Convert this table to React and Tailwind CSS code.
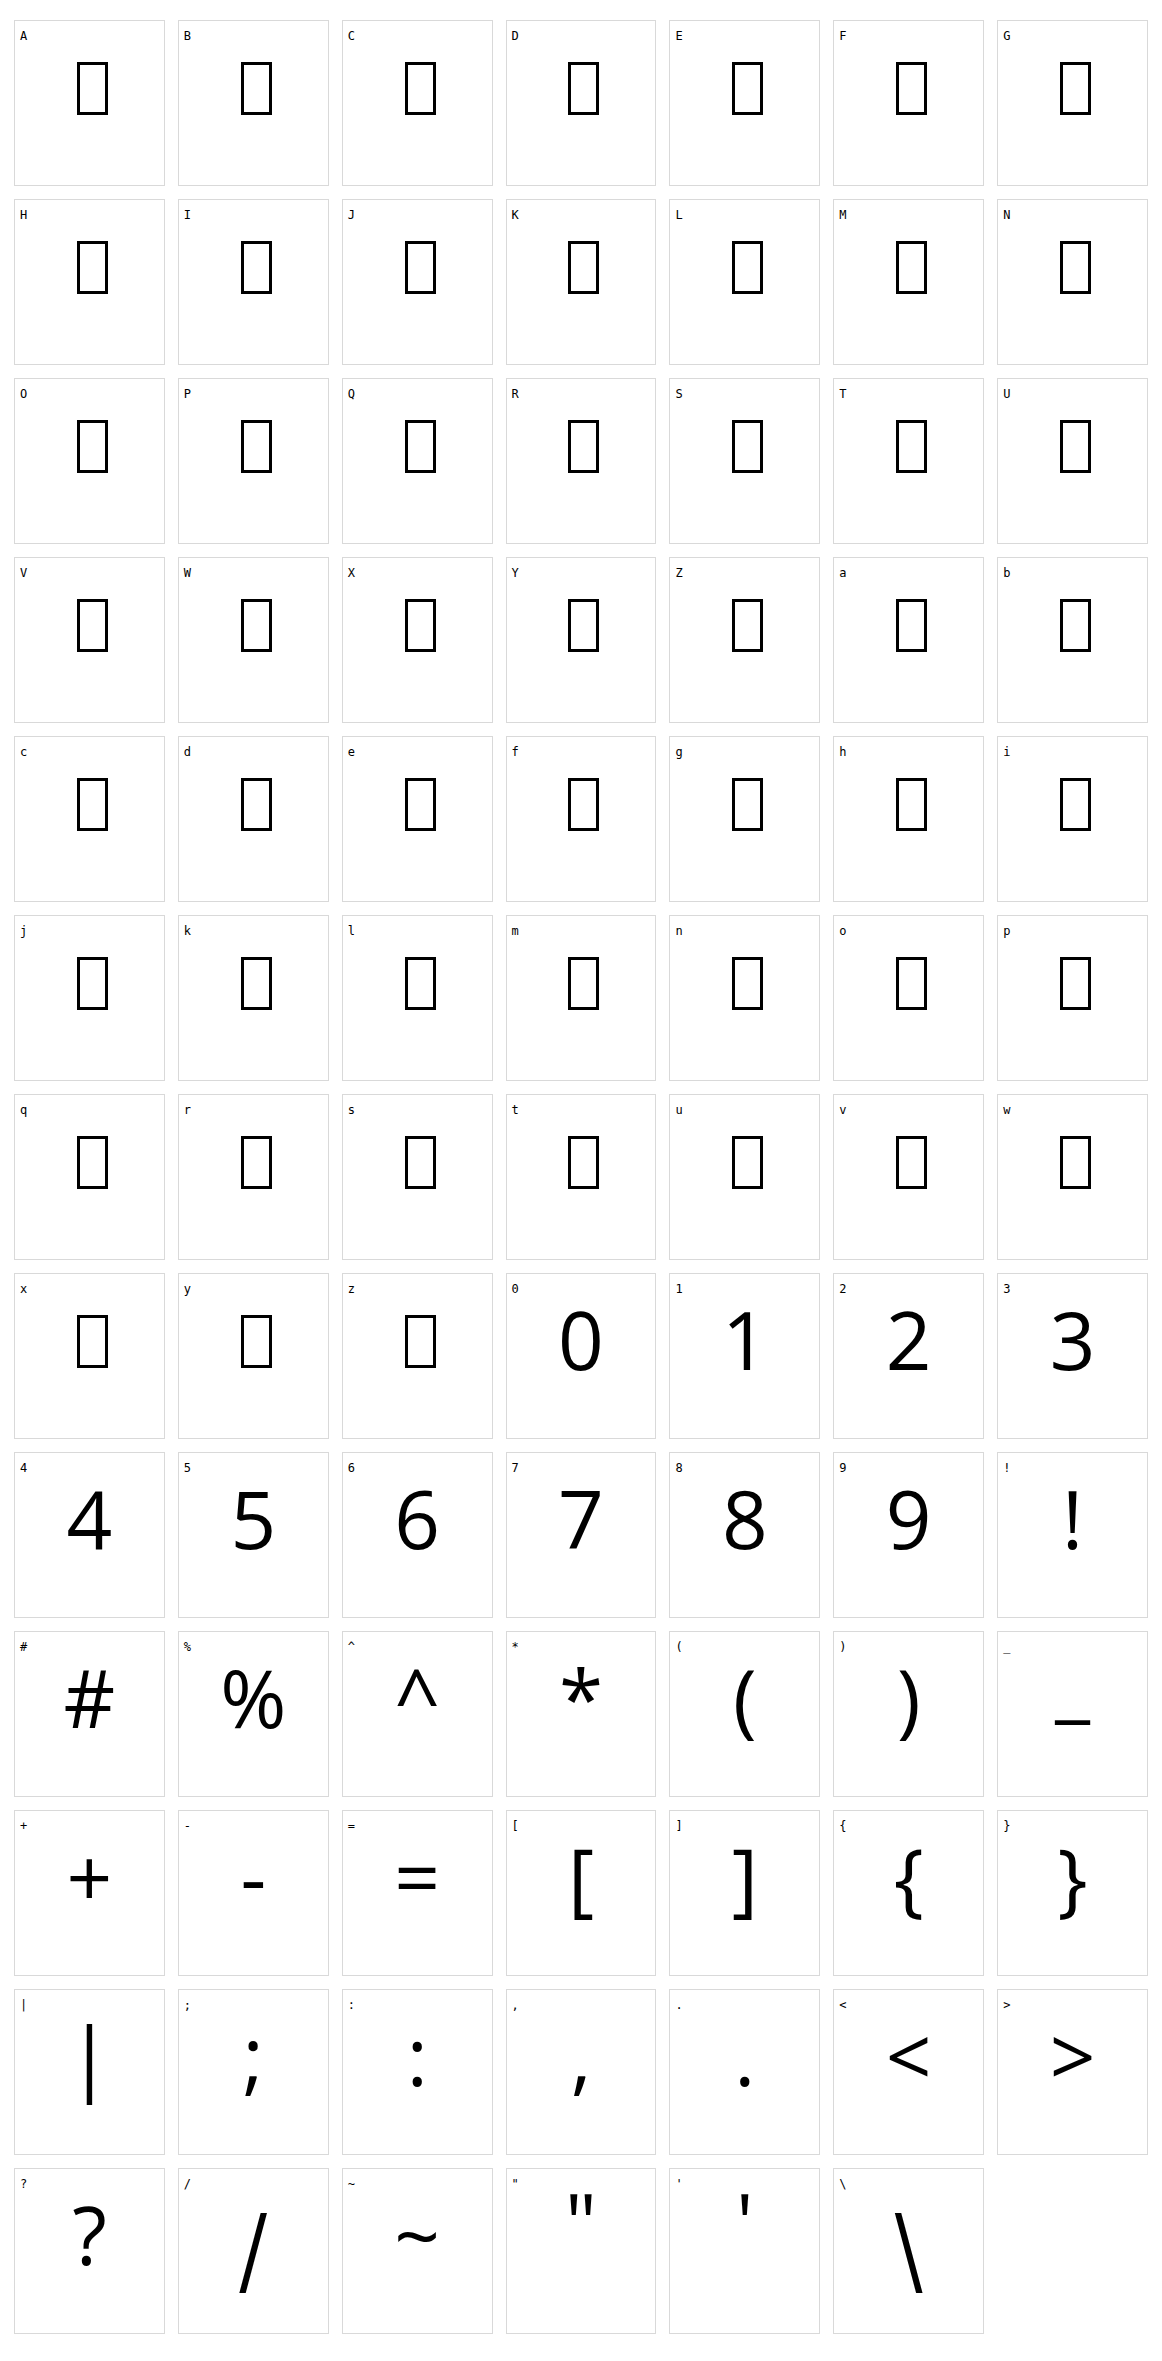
import React from 'react';

const letters = 'ABCDEFGHIJKLMNOPQRSTUVWXYZabcdefghijklmnopqrstuvwxyz'.split('');
const digits = '0123456789'.split('');
const symbols = ['!', '#', '%', '^', '*', '(', ')', '_', '+', '-', '=', '[', ']', '{', '}', '|', ';', ':', ',', '.', '<', '>', '?', '/', '~', '"', "'", '\\'];

// letters are missing from the font, so they show as a .notdef box
const chars = [
  ...letters.map((c) => ({ c, missing: true })),
  ...digits.map((c) => ({ c, missing: false })),
  ...symbols.map((c) => ({ c, missing: false })),
];

// a few glyphs sit differently in the specimen font
const tweaks = {
  '"': '-translate-y-[13px]',
  "'": '-translate-y-[13px]',
  _: '-translate-y-[15px]',
  '/': 'scale-y-[1.4] origin-top',
  '\\': 'scale-y-[1.4] origin-top',
};

const Tofu = () => (
  <div className="flex justify-center pl-[6px] pt-[16px]">
    <div className="w-[31px] h-[53px] border-[3px] border-black" />
  </div>
);

const GlyphCell = ({ c, missing }) => (
  <div className="h-[166px] border border-[#d9d9d9] bg-white flex flex-col">
    <div className="h-[25px] pt-[9px] pl-[5px] text-[12px] leading-none text-black font-['DejaVu_Sans_Mono',monospace]">
      {c}
    </div>
    {missing ? (
      <Tofu />
    ) : (
      <div className="text-center text-[80px] leading-[80px] text-black font-['Open_Sans',sans-serif]">
        <span className={`inline-block ${tweaks[c] || ''}`}>{c}</span>
      </div>
    )}
  </div>
);

export default function App() {
  return (
    <div className="min-h-screen bg-white px-[14px] pt-[20px] pb-[27px]">
      <div className="grid grid-cols-7 gap-[13px]">
        {chars.map((item) => (
          <GlyphCell key={item.c + (item.missing ? 'm' : '')} {...item} />
        ))}
      </div>
    </div>
  );
}
